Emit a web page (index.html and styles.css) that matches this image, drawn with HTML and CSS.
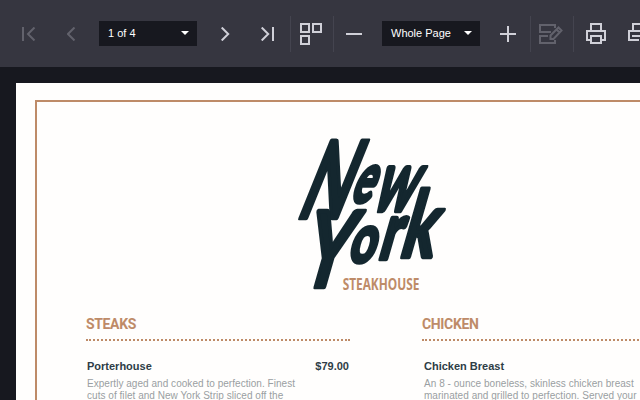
FILE: index.html
```
<!DOCTYPE html>
<html lang="en">
<head>
<meta charset="utf-8">
<title>Menu viewer</title>
<link rel="stylesheet" href="styles.css">
</head>
<body>
<header class="toolbar">
  <svg class="icon first off" width="14" height="14" viewBox="0 0 14 14"><path d="M1 0v14M12.5 .5L6 7l6.5 6.5"/></svg>
  <svg class="icon prev off" width="9" height="14" viewBox="0 0 9 14"><path d="M7.5 .5L1 7l6.5 6.5"/></svg>
  <div class="select pages"><span>1 of 4</span><i class="caret"></i></div>
  <svg class="icon next" width="9" height="14" viewBox="0 0 9 14"><path d="M.7 .5L7.2 7 .7 13.5"/></svg>
  <svg class="icon last" width="14" height="14" viewBox="0 0 14 14"><path d="M.7 .5L7.2 7 .7 13.5M12 0v14"/></svg>
  <i class="sep s1"></i>
  <svg class="icon thumbs" width="22" height="22" viewBox="0 0 22 22"><path d="M1 1h8v8H1zM13 1h8v8h-8zM1 13h8v8H1z"/></svg>
  <i class="sep s2"></i>
  <svg class="icon minus" width="16" height="16" viewBox="0 0 16 16"><path d="M0 8h16"/></svg>
  <div class="select zoom"><span>Whole Page</span><i class="caret"></i></div>
  <svg class="icon plus" width="16" height="16" viewBox="0 0 16 16"><path d="M0 8h16M8 0v16"/></svg>
  <i class="sep s3"></i>
  <svg class="icon edit off" width="24" height="22" viewBox="0 0 24 22"><path d="M16 5V2H1v7h11M9 13H1v7h15v-3M11.5 16v-3.5l8-8L22.5 7.5l-8 8.5zM17.5 6.5l3 3"/></svg>
  <i class="sep s4"></i>
  <svg class="icon print" width="20" height="22" viewBox="0 0 20 22"><path d="M5 8V1h10v7M5 17H1V8h18v9h-4M5 13h10v7H5z"/></svg>
  <svg class="icon print-page" width="20" height="22" viewBox="0 0 20 22"><path d="M5 8V1h10v7M11 17H1V8h18v5M4 13h10"/></svg>
</header>
<main class="sheet">
  <div class="frame">
    <svg class="logo" width="180" height="175" viewBox="0 0 540 525">
      <g class="script">
        <text transform="translate(44 279) skewX(-22) scale(.58 1)"><tspan class="cap">N</tspan><tspan class="e" x="248" y="-48">e</tspan><tspan class="w" x="375" y="-21">w</tspan></text>
        <text transform="translate(124 485) skewX(-16) scale(.68 1)"><tspan class="y" x="-108">Y</tspan><tspan class="o" x="82" y="-74">o</tspan><tspan class="r" x="209" y="-84">r</tspan><tspan class="k" x="301" y="-88">k</tspan></text>
      </g>
      <text class="house" x="188" y="494" textLength="230" lengthAdjust="spacingAndGlyphs">STEAKHOUSE</text>
    </svg>
    <div class="columns">
      <section class="course">
        <h2>STEAKS</h2>
        <div class="dish"><b>Porterhouse</b><b>$79.00</b></div>
        <p>Expertly aged and cooked to perfection. Finest<br>cuts of filet and New York Strip sliced off the</p>
      </section>
      <section class="course chicken">
        <h2>CHICKEN</h2>
        <div class="dish"><b>Chicken Breast</b></div>
        <p>An 8 - ounce boneless, skinless chicken breast<br>marinated and grilled to perfection. Served your</p>
      </section>
    </div>
  </div>
</main>
</body>
</html>
```
FILE: styles.css
```
* { box-sizing: border-box; }
body {
  margin: 0;
  width: 640px;
  height: 400px;
  overflow: hidden;
  background: #17181f;
  font-family: "Liberation Sans", sans-serif;
}
.toolbar {
  display: flex;
  align-items: center;
  height: 67px;
  background: #363640;
  overflow: hidden;
}
.toolbar > * { flex: none; }
.icon { fill: none; stroke: #d0d0d8; stroke-width: 2; }
.off { stroke: #62626c; }
.first { margin-left: 22px; }
.prev { margin-left: 31px; }
.pages { margin-left: 23px; }
.next { margin-left: 24px; }
.last { margin-left: 31px; }
.s1 { margin-left: 15px; }
.thumbs { margin-left: 9px; }
.s2 { margin-left: 11px; }
.minus { margin-left: 12px; }
.zoom { margin-left: 20px; }
.plus { margin-left: 20px; }
.s3 { margin-left: 14px; }
.edit { margin-left: 8px; }
.s4 { margin-left: 10px; }
.print { margin-left: 12px; }
.print-page { margin-left: 22px; }
.sep { width: 1px; height: 36px; background: #44444f; }
.select {
  display: flex;
  align-items: center;
  justify-content: space-between;
  width: 98px;
  height: 25px;
  padding: 0 8px 1px 9px;
  background: #17181f;
  color: #fff;
  font-size: 11px;
}
.caret {
  border: 4px solid transparent;
  border-top-color: #fff;
  border-bottom: 0;
}
.sheet {
  width: 624px;
  height: 317px;
  margin: 16px 0 0 16px;
  padding: 17px 0 0 19px;
  background: #fffefd;
}
.frame {
  height: 300px;
  border: solid #be8b68;
  border-width: 2px 0 0 2px;
}
.logo { display: block; margin: 23px 0 0 243px; overflow: visible; }
.script {
  font-family: Lato, sans-serif;
  font-weight: 700;
  fill: #14272f;
  stroke: #14272f;
  stroke-width: 14px;
  stroke-linejoin: round;
}
.cap { font-size: 320px; }
.e { font-size: 205px; }
.w { font-size: 255px; }
.y { font-size: 315px; }
.o { font-size: 200px; }
.r { font-size: 240px; }
.k { font-size: 275px; }
.house {
  font: 700 47px "Open Sans", sans-serif;
  fill: #be8b68;
}
.columns { display: flex; gap: 72px; margin: 14px 0 0 49px; }
.course { width: 264px; flex: none; }
.chicken { width: 217px; }
.chicken .dish, .chicken p { padding-left: 1px; }
.chicken .dish { padding-left: 2px; }
h2 {
  margin: 0;
  height: 27px;
  border-bottom: 2px dotted #be8b68;
  color: #be8b68;
  font: 700 14px/21px Roboto, sans-serif;
  letter-spacing: -.35px;
}
.dish {
  display: flex;
  justify-content: space-between;
  margin-top: 18px;
  padding: 0 1px;
  color: #2e3d46;
  font-size: 11px;
  line-height: 15px;
}
p {
  margin: 4px 0 0 1px;
  color: #9a9fa2;
  font-size: 10px;
  line-height: 12px;
  letter-spacing: .04px;
  white-space: nowrap;
}
```
